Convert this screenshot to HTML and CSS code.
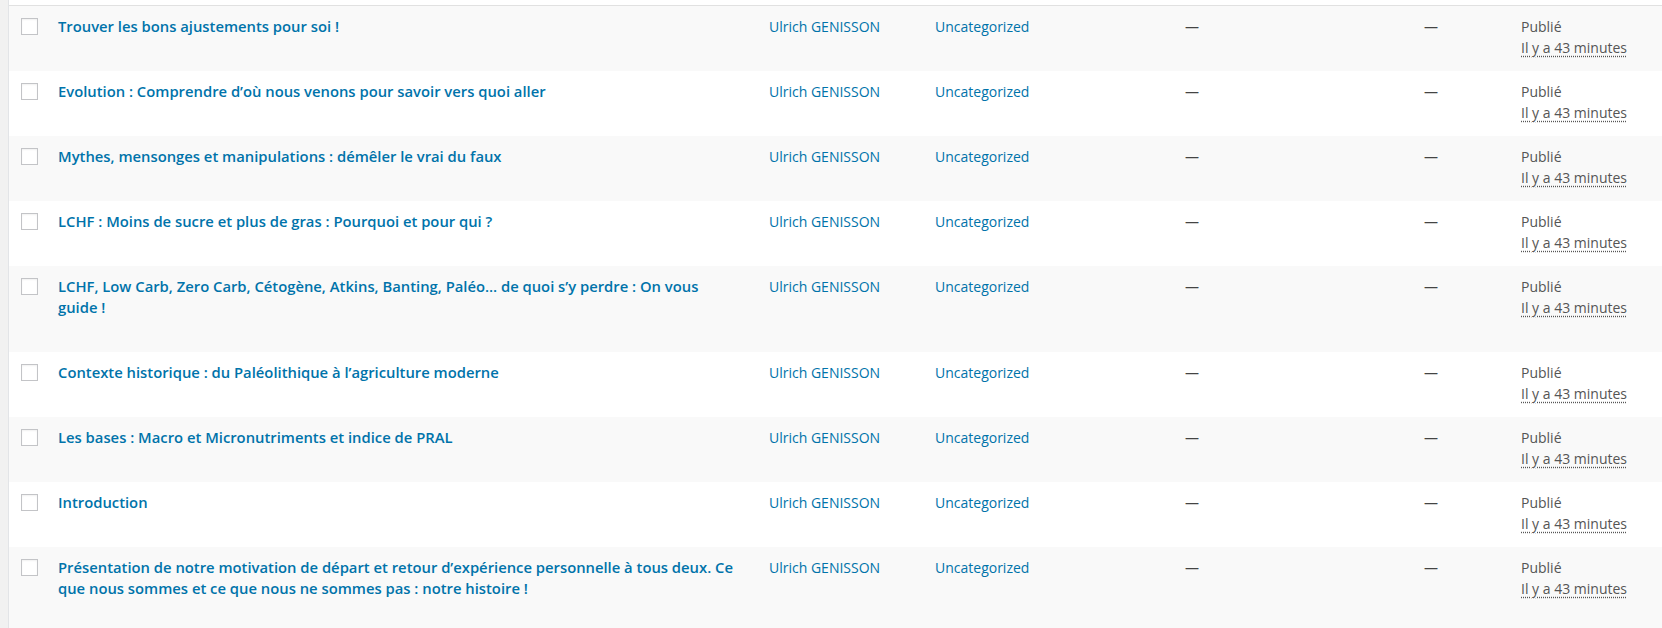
FILE: index.html
```html
<!DOCTYPE html>
<html lang="fr">
<head>
<meta charset="utf-8">
<title>Articles</title>
<link rel="stylesheet" href="styles.css">
</head>
<body>
<div class="wrap">
  <table class="posts">
    <colgroup>
      <col class="c-check">
      <col class="c-title">
      <col class="c-author">
      <col class="c-cat">
      <col class="c-tags">
      <col class="c-comments">
      <col class="c-date">
    </colgroup>
    <thead>
      <tr class="head-edge"><th></th><th></th><th></th><th></th><th></th><th></th><th></th></tr>
    </thead>
    <tbody>
      <tr>
        <th class="check"><span class="box"></span></th>
        <td class="title"><a href="#">Trouver les bons ajustements pour soi !</a></td>
        <td><a class="meta" href="#">Ulrich GENISSON</a></td>
        <td><a class="meta" href="#">Uncategorized</a></td>
        <td class="dash">—</td>
        <td class="dash">—</td>
        <td class="date">Publié<br><abbr title="">Il y a 43 minutes</abbr></td>
      </tr>
      <tr>
        <th class="check"><span class="box"></span></th>
        <td class="title"><a href="#">Evolution : Comprendre d’où nous venons pour savoir vers quoi aller</a></td>
        <td><a class="meta" href="#">Ulrich GENISSON</a></td>
        <td><a class="meta" href="#">Uncategorized</a></td>
        <td class="dash">—</td>
        <td class="dash">—</td>
        <td class="date">Publié<br><abbr title="">Il y a 43 minutes</abbr></td>
      </tr>
      <tr>
        <th class="check"><span class="box"></span></th>
        <td class="title"><a href="#">Mythes, mensonges et manipulations : démêler le vrai du faux</a></td>
        <td><a class="meta" href="#">Ulrich GENISSON</a></td>
        <td><a class="meta" href="#">Uncategorized</a></td>
        <td class="dash">—</td>
        <td class="dash">—</td>
        <td class="date">Publié<br><abbr title="">Il y a 43 minutes</abbr></td>
      </tr>
      <tr>
        <th class="check"><span class="box"></span></th>
        <td class="title"><a href="#">LCHF : Moins de sucre et plus de gras : Pourquoi et pour qui ?</a></td>
        <td><a class="meta" href="#">Ulrich GENISSON</a></td>
        <td><a class="meta" href="#">Uncategorized</a></td>
        <td class="dash">—</td>
        <td class="dash">—</td>
        <td class="date">Publié<br><abbr title="">Il y a 43 minutes</abbr></td>
      </tr>
      <tr>
        <th class="check"><span class="box"></span></th>
        <td class="title"><a href="#">LCHF, Low Carb, Zero Carb, Cétogène, Atkins, Banting, Paléo… de quoi s’y perdre : On vous guide !</a></td>
        <td><a class="meta" href="#">Ulrich GENISSON</a></td>
        <td><a class="meta" href="#">Uncategorized</a></td>
        <td class="dash">—</td>
        <td class="dash">—</td>
        <td class="date">Publié<br><abbr title="">Il y a 43 minutes</abbr></td>
      </tr>
      <tr>
        <th class="check"><span class="box"></span></th>
        <td class="title"><a href="#">Contexte historique : du Paléolithique à l’agriculture moderne</a></td>
        <td><a class="meta" href="#">Ulrich GENISSON</a></td>
        <td><a class="meta" href="#">Uncategorized</a></td>
        <td class="dash">—</td>
        <td class="dash">—</td>
        <td class="date">Publié<br><abbr title="">Il y a 43 minutes</abbr></td>
      </tr>
      <tr>
        <th class="check"><span class="box"></span></th>
        <td class="title"><a href="#">Les bases : Macro et Micronutriments et indice de PRAL</a></td>
        <td><a class="meta" href="#">Ulrich GENISSON</a></td>
        <td><a class="meta" href="#">Uncategorized</a></td>
        <td class="dash">—</td>
        <td class="dash">—</td>
        <td class="date">Publié<br><abbr title="">Il y a 43 minutes</abbr></td>
      </tr>
      <tr>
        <th class="check"><span class="box"></span></th>
        <td class="title"><a href="#">Introduction</a></td>
        <td><a class="meta" href="#">Ulrich GENISSON</a></td>
        <td><a class="meta" href="#">Uncategorized</a></td>
        <td class="dash">—</td>
        <td class="dash">—</td>
        <td class="date">Publié<br><abbr title="">Il y a 43 minutes</abbr></td>
      </tr>
      <tr>
        <th class="check"><span class="box"></span></th>
        <td class="title"><a href="#">Présentation de notre motivation de départ et retour d’expérience personnelle à tous deux. Ce que nous sommes et ce que nous ne sommes pas : notre histoire !</a></td>
        <td><a class="meta" href="#">Ulrich GENISSON</a></td>
        <td><a class="meta" href="#">Uncategorized</a></td>
        <td class="dash">—</td>
        <td class="dash">—</td>
        <td class="date">Publié<br><abbr title="">Il y a 43 minutes</abbr></td>
      </tr>
    </tbody>
  </table>
</div>
</body>
</html>
```

FILE: styles.css
```css
html, body {
  margin: 0;
  padding: 0;
}
body {
  background: #f1f1f1;
  font-family: "Open Sans", "Noto Sans", sans-serif;
  font-size: 14px;
  color: #555;
  overflow: hidden;
}
.wrap {
  padding-left: 8px;
}
.posts {
  width: 100%;
  table-layout: fixed;
  border-collapse: separate;
  border-spacing: 0;
  border-left: 1px solid #e2e4e7;
  background: #fff;
}
.c-check { width: 39px; }
.c-title { width: 711px; }
.c-author { width: 166px; }
.c-cat { width: 250px; }
.c-tags { width: 239px; }
.c-comments { width: 97px; }
.c-date { width: auto; }

.head-edge th {
  height: 5px;
  padding: 0;
  border-bottom: 1px solid #e1e1e1;
  background: #fff;
}
tbody tr:nth-child(odd) {
  background: #f9f9f9;
}
tbody tr:nth-child(even) {
  background: #fff;
}
tbody td, tbody th {
  vertical-align: top;
  text-align: left;
  padding: 10px 10px 6px 10px;
  line-height: 21px;
}
tbody td.title {
  padding-right: 19px;
  padding-bottom: 34px;
}
tbody th.check {
  padding: 12px 0 0 12px;
}
.box {
  display: block;
  width: 17px;
  height: 17px;
  box-sizing: border-box;
  border: 1px solid #c3c4c7;
  background: #fff;
  box-shadow: inset 0 1px 2px rgba(0,0,0,.06);
}
.title a {
  font-size: 14.8px;
  font-weight: 600;
  color: #0073aa;
  text-decoration: none;
}
a.meta {
  color: #0073aa;
  text-decoration: none;
}
.dash {
  color: #444;
}
.date {
  color: #555;
}
.date abbr {
  text-decoration: underline dotted;
  text-underline-offset: 3px;
}
```
